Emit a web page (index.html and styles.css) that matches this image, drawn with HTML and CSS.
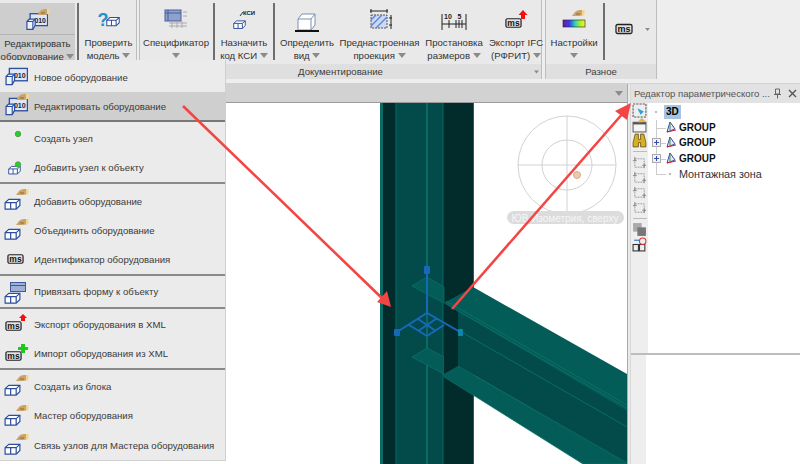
FILE: index.html
```html
<!DOCTYPE html>
<html lang="ru">
<head>
<meta charset="utf-8">
<title>Редактор оборудования</title>
<link rel="stylesheet" href="styles.css">
</head>
<body>
<svg class="defs" width="0" height="0" aria-hidden="true">
  <defs>
    <symbol id="hand" viewBox="0 0 14 8">
      <path d="M1 7 L4 3 Q6 1 9 1 L13 1 L13 6 L8 7 Z" fill="#c9a36a"/>
      <path d="M11 1 h2.5 v5 h-2.5 Z" fill="#f2d98a"/>
      <path d="M5 5 h4" stroke="#8a6a3a" stroke-width="1"/>
    </symbol>
    <symbol id="box" viewBox="0 0 18 13">
      <path d="M1 5 L5 1.5 H17 V8 L13 12 H1 Z" fill="#fff" stroke="#2b4f9e" stroke-width="1.3"/>
      <path d="M1 5 H13 V12 M13 5 L17 1.5 M7 5 V12" fill="none" stroke="#2b4f9e" stroke-width="1.3"/>
    </symbol>
    <symbol id="card" viewBox="0 0 24 20">
      <rect x="4.5" y="1.5" width="19" height="13" fill="#dfe7f5" stroke="#2b4f9e" stroke-width="1.4"/>
      <text x="15.5" y="11.5" class="ic-010">010</text>
      <path d="M1 10 L3.5 7.5 H10 V14 L7.5 18.5 H1 Z" fill="#eef2fa" stroke="#2b4f9e" stroke-width="1.3"/>
      <path d="M1 10 H7.5 V18.5 M7.5 10 L10 7.5" fill="none" stroke="#2b4f9e" stroke-width="1.2"/>
    </symbol>
    <symbol id="ms" viewBox="0 0 18 12">
      <rect x="1" y="1.5" width="16" height="9" rx="1.5" fill="#e4e4e4" stroke="#222" stroke-width="1.3"/>
      <text x="9" y="9" class="ic-ms">ms</text>
    </symbol>
    <symbol id="form" viewBox="0 0 16 10">
      <rect x="0.5" y="0.5" width="15" height="9" fill="#9fb0d6" stroke="#3e5a9c"/>
      <path d="M0.5 3.5 H15.5" stroke="#3e5a9c"/>
    </symbol>
    <symbol id="group" viewBox="0 0 12 13">
      <path d="M2 11 L5 1 L10 8 Z" fill="#e4e8f6" stroke="#3a49a8" stroke-width="1"/>
      <path d="M5 1 V9" stroke="#3a8a4a" stroke-width="1"/>
      <path d="M2 11 L11 9" stroke="#c22" stroke-width="1"/>
    </symbol>
    <symbol id="gnode" viewBox="0 0 16 16">
      <rect x="3" y="4" width="10" height="9" fill="none" stroke="#999" stroke-dasharray="2 1"/>
      <path d="M1 6 H5 M3 2 V6 M11 11 H15 M13 9 V14" stroke="#888"/>
    </symbol>
    <symbol id="arrow-down" viewBox="0 0 8 5">
      <path d="M0 0 H8 L4 5 Z" fill="#8b8b8b"/>
    </symbol>
  </defs>
</svg>

<div class="app">
  <header class="ribbon">
    <section class="panel panel-first">
      <div class="tools">
        <button class="tool tool-active w-75">
          <span class="tool-icon"><svg class="i-24" viewBox="0 0 24 24"><use href="#card" x="0" y="4" width="22" height="19"/><use href="#hand" x="10" y="0" width="14" height="8"/></svg></span>
          <span class="tool-label">Редактировать<br><span class="nowrap">оборудование <svg class="caret"><use href="#arrow-down"/></svg></span></span>
        </button>
        <i class="vsep"></i>
        <button class="tool w-57">
          <span class="tool-icon"><svg class="i-24" viewBox="0 0 24 24"><text x="6" y="18" class="ic-q">?</text><use href="#box" x="9" y="7" width="14" height="13"/></svg></span>
          <span class="tool-label">Проверить<br><span class="nowrap">модель <svg class="caret"><use href="#arrow-down"/></svg></span></span>
        </button>
      </div>
      <div class="panel-foot"></div>
    </section>

    <section class="panel panel-doc">
      <div class="tools">
        <button class="tool w-73">
          <span class="tool-icon"><svg class="i-24" viewBox="0 0 24 24"><rect x="1" y="2" width="16" height="11" fill="#8fa0cc" stroke="#475f9e"/><path d="M1 5 H17 M4 2 V13" stroke="#475f9e"/><path d="M5 15 H23 M5 18 H23 M8 13 V20 M13 13 V20 M18 13 V20 M19 4 H23 M19 8 H23" stroke="#aaa"/></svg></span>
          <span class="tool-label">Спецификатор<br><svg class="caret"><use href="#arrow-down"/></svg></span>
        </button>
        <i class="vsep"></i>
        <button class="tool w-56">
          <span class="tool-icon"><svg class="i-24" viewBox="0 0 24 24"><use href="#box" x="1" y="10" width="13" height="13"/><path d="M8 8 L11 4" stroke="#333"/><text x="17" y="7" class="ic-ksi">КСИ</text></svg></span>
          <span class="tool-label">Назначить<br><span class="nowrap">код КСИ <svg class="caret"><use href="#arrow-down"/></svg></span></span>
        </button>
        <i class="vsep"></i>
        <button class="tool w-62">
          <span class="tool-icon"><svg class="i-24" viewBox="0 0 24 24"><path d="M3 11 L7 6 H20 V17 L16 22 H3 Z" fill="#fff" stroke="#7d8db5"/><path d="M3 11 H16 V22 M16 11 L20 6" fill="none" stroke="#7d8db5"/><path d="M0 23 H24" stroke="#111" stroke-width="2"/></svg></span>
          <span class="tool-label">Определить<br><span class="nowrap">вид <svg class="caret"><use href="#arrow-down"/></svg></span></span>
        </button>
        <button class="tool w-83">
          <span class="tool-icon"><svg class="i-24" viewBox="0 0 24 24"><rect x="3" y="7" width="16" height="13" fill="#cbd9f2" stroke="#555" stroke-dasharray="2 1"/><path d="M3 18 L14 7 M8 20 L19 9 M3 12 L8 7" stroke="#5f86d6" stroke-width="1.4"/><path d="M2 3 H20 M3 1 V5 M19 1 V5 M23 7 V21 M21 10 H24 M21 17 H24" stroke="#222"/></svg></span>
          <span class="tool-label">Преднастроенная<br><span class="nowrap">проекция <svg class="caret"><use href="#arrow-down"/></svg></span></span>
        </button>
        <button class="tool w-66">
          <span class="tool-icon"><svg class="i-24 i-wide" viewBox="0 0 26 24"><path d="M1 6 V22 M25 6 V22 M1 16 H25 M8 12 V20 M15 12 V20 M18 12 V20 M21 12 V20" stroke="#222"/><text x="7" y="11" class="ic-num">10</text><text x="18.5" y="11" class="ic-num">5</text></svg></span>
          <span class="tool-label">Простановка<br><span class="nowrap">размеров <svg class="caret"><use href="#arrow-down"/></svg></span></span>
        </button>
        <button class="tool w-58">
          <span class="tool-icon"><svg class="i-24" viewBox="0 0 24 24"><use href="#ms" x="1" y="9" width="17" height="12"/><path d="M19 2 L23.5 7 H21 V11 H17 V7 H14.5 Z" fill="#e11"/></svg></span>
          <span class="tool-label">Экспорт IFC<br><span class="nowrap">(РФРИТ) <svg class="caret"><use href="#arrow-down"/></svg></span></span>
        </button>
      </div>
      <div class="panel-foot">
        <span>Документирование</span>
        <svg class="launcher"><use href="#arrow-down"/></svg>
      </div>
    </section>

    <section class="panel panel-misc">
      <div class="tools">
        <button class="tool w-56">
          <span class="tool-icon"><svg class="i-24" viewBox="0 0 24 24"><use href="#hand" x="9" y="1" width="14" height="8"/><defs><linearGradient id="spectrum"><stop offset="0" stop-color="#701a9a"/><stop offset=".3" stop-color="#3c3cf0"/><stop offset=".55" stop-color="#28d8b0"/><stop offset=".8" stop-color="#b8f020"/><stop offset="1" stop-color="#f0f040"/></linearGradient></defs><rect x="1" y="12" width="22" height="7" fill="url(#spectrum)" stroke="#222" stroke-width=".6"/></svg></span>
          <span class="tool-label">Настройки<br><svg class="caret"><use href="#arrow-down"/></svg></span>
        </button>
        <i class="vsep"></i>
        <div class="tool-ms">
          <svg class="i-ms"><use href="#ms"/></svg>
          <svg class="caret-sm"><use href="#arrow-down"/></svg>
        </div>
      </div>
      <div class="panel-foot"><span>Разное</span></div>
    </section>
  </header>

  <div class="workspace">
    <main class="doc">
      <div class="doc-tabs"><svg class="doc-caret"><use href="#arrow-down"/></svg></div>
      <svg class="viewport" viewBox="0 103 627 361" preserveAspectRatio="none">
        <!-- column -->
        <rect x="380" y="103" width="94" height="361" fill="#0b6a64"/>
        <rect x="383" y="103" width="13" height="361" fill="#022b2b"/>
        <rect x="396" y="103" width="47" height="361" fill="#034b4b"/>
        <rect x="426" y="103" width="2" height="361" fill="#0b6a64"/>
        <rect x="443" y="103" width="30" height="361" fill="#022b2b"/>
        <path d="M396 103 V464 M443 103 V464" stroke="#0b6a64" stroke-width="1"/>
        <!-- flanges through the column -->
        <path d="M412 286 L427 277 L444 287 V303 Z" fill="#045c58" stroke="#0d736c" stroke-width=".7"/>
        <path d="M412 357 L427 348 L444 357 V374 Z" fill="#045c58" stroke="#0d736c" stroke-width=".7"/>
        <!-- beam -->
        <path d="M458 300 L627 400 V464 L458 366 Z" fill="#034b4b"/>
        <path d="M444 303 L473 287 L627 374 V411 Z" fill="#045c58"/>
        <path d="M444 303 L627 408 M446 301 L627 405 M458 330 L627 427" stroke="#0d736c" stroke-width=".8" fill="none"/>
        <path d="M444 374 L458 366 L627 463 V464 L583 464 L473 395 L444 377 Z" fill="#045c58" stroke="#0d736c" stroke-width=".7"/>
        <path d="M444 303 L458 313 V366 L444 374 Z" fill="#022b2b"/>
        <!-- gizmo -->
        <g class="gizmo">
          <path d="M427 270 V313 M397 332 L427 313 L460 332 M427 336 L409 325 M427 336 L444 325 M418 319 L436 331 M436 319 L418 331"/>
          <rect x="424" y="266" width="6" height="8" rx="1" fill="#1668bb" stroke="none"/>
          <rect x="394" y="329" width="6" height="7" rx="1" fill="#1668bb" stroke="none"/>
          <rect x="458" y="329" width="5" height="7" rx="1" fill="#0f86a8" stroke="none"/>
        </g>
        <!-- compass -->
        <g class="compass">
          <circle cx="567" cy="165" r="49"/>
          <circle cx="567" cy="165" r="25"/>
          <path d="M518 165 H616 M567 116 V212"/>
        </g>
        <circle cx="577" cy="175" r="3.5" fill="#ecc9a8" stroke="#d2ae8e"/>
        <rect x="507" y="211" width="117" height="13" rx="6.5" fill="#dcdcdc"/>
        <text x="565" y="221.5" class="compass-label">ЮВ Изометрия, сверху</text>
      </svg>
    </main>

    <aside class="side">
      <div class="side-head">
        <span class="side-title">Редактор параметрического ...</span>
        <svg class="side-pin" viewBox="0 0 9 11"><path d="M2.5 1 H6.5 V6 H2.5 Z M1 6.5 H8 M4.5 7 V10.5" fill="none" stroke="#666"/></svg>
        <svg class="side-close" viewBox="0 0 9 9"><path d="M1 1 L8 8 M8 1 L1 8" stroke="#555" stroke-width="1.4"/></svg>
      </div>
      <div class="side-top">
        <div class="side-bar">
          <svg class="bar-ic" viewBox="0 0 14 14"><rect x="1" y="1" width="12" height="12" fill="none" stroke="#555" stroke-dasharray="2 1"/><path d="M5 5 L11 8 L8 11 Z" fill="#2aa0e0"/></svg>
          <svg class="bar-ic" viewBox="0 0 14 14"><rect x="1" y="4" width="12" height="9" fill="#f5f5f5" stroke="#666"/><rect x="1" y="4" width="12" height="2" fill="#555"/><path d="M5 4 L9 0 L13 3 L9 4 Z" fill="#e0b840"/></svg>
          <svg class="bar-ic" viewBox="0 0 14 14"><path d="M3 1 H6 V6 H8 V1 H11 L13 9 V13 H8 V9 H6 V13 H1 V9 Z" fill="#d8b024" stroke="#5a4a10" stroke-width=".7"/></svg>
          <i class="bar-sep"></i>
          <svg class="bar-ic"><use href="#gnode"/></svg>
          <svg class="bar-ic"><use href="#gnode"/></svg>
          <svg class="bar-ic"><use href="#gnode"/></svg>
          <svg class="bar-ic"><use href="#gnode"/></svg>
          <i class="bar-sep"></i>
          <svg class="bar-ic" viewBox="0 0 14 14"><rect x="1" y="1" width="8" height="8" fill="#aaa"/><rect x="5" y="5" width="8" height="8" fill="#777"/></svg>
          <svg class="bar-ic" viewBox="0 0 14 14"><rect x="1" y="7" width="5" height="6" fill="none" stroke="#333"/><rect x="7" y="7" width="5" height="6" fill="none" stroke="#333"/><circle cx="10" cy="4" r="3" fill="none" stroke="#d33"/><path d="M2 3 H7" stroke="#26c"/></svg>
        </div>
        <ul class="tree">
          <li class="tree-row tree-root"><i class="node-dot"></i><span class="tree-sel">3D</span></li>
          <li class="tree-row tree-branch"><svg class="tree-ic"><use href="#group"/></svg><b>GROUP</b></li>
          <li class="tree-row tree-branch"><i class="plus"></i><svg class="tree-ic"><use href="#group"/></svg><b>GROUP</b></li>
          <li class="tree-row tree-branch"><i class="plus"></i><svg class="tree-ic"><use href="#group"/></svg><b>GROUP</b></li>
          <li class="tree-row tree-branch tree-last"><i class="leaf-dot"></i><span>Монтажная зона</span></li>
        </ul>
      </div>
      <div class="side-bottom"><div class="side-bottom-bar"></div></div>
    </aside>
  </div>

  <nav class="menu">
    <a class="menu-item"><svg class="mi"><use href="#card" x="2" y="3" width="23" height="19"/></svg>Новое оборудование</a>
    <a class="menu-item menu-hover"><svg class="mi"><use href="#card" x="2" y="4" width="23" height="19"/><use href="#hand" x="12" y="0" width="14" height="8"/></svg>Редактировать оборудование</a>
    <a class="menu-item mt-1"><svg class="mi"><circle cx="15" cy="9" r="2.7" fill="#22d422" stroke="#5a9a5a"/></svg>Создать узел</a>
    <a class="menu-item menu-last"><svg class="mi"><use href="#box" x="5" y="10" width="13" height="10"/><circle cx="15" cy="9.5" r="2.7" fill="#22d422" stroke="#5a9a5a"/></svg>Добавить узел к объекту</a>

    <a class="menu-item mt-2"><svg class="mi"><use href="#box" x="1" y="10" width="17" height="12"/><use href="#hand" x="12" y="0" width="14" height="8"/></svg>Добавить оборудование</a>
    <a class="menu-item h-29"><svg class="mi"><use href="#box" x="1" y="10" width="17" height="12"/><use href="#hand" x="12" y="0" width="14" height="8"/></svg>Объединить оборудование</a>
    <a class="menu-item menu-last"><svg class="mi"><use href="#ms" x="4" y="6" width="17" height="12"/></svg>Идентификатор оборудования</a>

    <a class="menu-item menu-last menu-tall"><svg class="mi"><use href="#box" x="1" y="13" width="17" height="12"/><use href="#form" x="7" y="3" width="16" height="10"/></svg>Привязать форму к объекту</a>

    <a class="menu-item"><svg class="mi"><use href="#ms" x="2" y="9" width="17" height="12"/><path d="M20 3 L24 7 H22 V10 H18 V7 H16 Z" fill="#e11"/></svg>Экспорт оборудования в XML</a>
    <a class="menu-item menu-last"><svg class="mi"><use href="#ms" x="2" y="9" width="17" height="12"/><path d="M18 3 H22 V6 H25 V9 H22 V12 H18 V9 H15 V6 H18 Z" fill="#1ec81e"/></svg>Импорт оборудования из XML</a>

    <a class="menu-item mt-1"><svg class="mi"><use href="#box" x="1" y="11" width="17" height="12"/><use href="#hand" x="12" y="1" width="14" height="8"/></svg>Создать из блока</a>
    <a class="menu-item h-29"><svg class="mi"><use href="#box" x="1" y="11" width="17" height="12"/><use href="#hand" x="12" y="1" width="14" height="8"/></svg>Мастер оборудования</a>
    <a class="menu-item"><svg class="mi"><use href="#box" x="1" y="11" width="17" height="12"/><use href="#hand" x="12" y="1" width="14" height="8"/></svg>Связь узлов для Мастера оборудования</a>
  </nav>

  <svg class="arrows" viewBox="0 0 800 464">
    <path d="M183 106 L386 302" class="arrow-line"/>
    <path d="M391 307 L377 302 L387 291 Z" class="arrow-head"/>
    <path d="M452 309 L624 112" class="arrow-line"/>
    <path d="M631 103 L627 120 L615 111 Z" class="arrow-head"/>
  </svg>
</div>
</body>
</html>
```

FILE: styles.css
```css
* { box-sizing: border-box; }
html, body { margin: 0; padding: 0; }
body {
  width: 800px;
  height: 464px;
  overflow: hidden;
  font-family: "Liberation Sans", "Noto Sans", sans-serif;
  font-size: 9.6px;
  color: #333;
  background: #e9e9e9;
}
.defs { position: absolute; }
.app { position: relative; width: 800px; height: 464px; overflow: hidden; display: flex; flex-direction: column; }

/* ribbon */
.ribbon { display: flex; height: 84px; background: #eeeeee; padding-bottom: 4px; border-bottom: 1px solid #d2d2d2; flex: none; }
.panel { display: flex; flex-direction: column; background: #e9e9e9; border-right: 1px solid #bdbdbd; }
.panel-first { width: 137px; }
.panel-doc { width: 403px; margin-left: 2px; border-left: 1px solid #bdbdbd; }
.panel-misc { width: 112px; margin-left: 3px; border-left: 1px solid #bdbdbd; }
.tools { display: flex; flex: 1; align-items: stretch; }
.panel-foot {
  position: relative;
  height: 15px;
  background: #dfdfdf;
  text-align: center;
  line-height: 15px;
  color: #3c3c3c;
}
.launcher { position: absolute; right: 2px; top: 6px; width: 5px; height: 4px; }
.tool {
  display: flex;
  flex-direction: column;
  align-items: center;
  padding: 0;
  border: 0;
  background: none;
  font: inherit;
  color: inherit;
  flex: none;
}
.tool-active { background: #cecece; margin-top: 3px; padding-top: 0; }
.tool-active .tool-icon { height: 32px; border-bottom: 1px solid #b3b3b3; }
.tool-active .tool-label { padding-top: 2px; }
.tool-icon { height: 35px; width: 100%; display: flex; align-items: center; justify-content: center; padding-top: 4px; flex: none; }
.tool-active .tool-icon { padding-top: 3px; }
.tool-label { line-height: 13px; text-align: center; white-space: nowrap; padding-top: 1px; }
.nowrap { white-space: nowrap; }
.i-24 { width: 24px; height: 24px; display: block; }
.i-wide { width: 26px; }
.caret { width: 8px; height: 5px; display: inline-block; vertical-align: 1px; }
.w-75 { width: 75px; }
.w-57 { width: 57px; }
.w-73 { width: 72px; }
.w-56 { width: 56px; }
.w-62 { width: 62px; }
.w-83 { width: 83px; }
.w-66 { width: 66px; }
.w-58 { width: 58px; }
.vsep { width: 2px; margin: 3px 1px 4px; background: #6e6e6e; flex: none; }
.panel-first .vsep { margin-left: 2px; margin-right: 1px; }
.tool-ms { display: flex; align-items: center; padding: 0 0 6px 9px; gap: 12px; }
.i-ms { width: 18px; height: 12px; }
.caret-sm { width: 5px; height: 3px; }
.ic-010 { font: 700 7.5px "Liberation Sans", sans-serif; fill: #223; text-anchor: middle; }
.ic-ms { font: 700 9px "Liberation Sans", sans-serif; fill: #111; text-anchor: middle; }
.ic-q { font: 700 18px "Liberation Sans", sans-serif; fill: #2a8fc0; text-anchor: middle; }
.ic-ksi { font: 700 6px "Liberation Sans", sans-serif; fill: #222; text-anchor: middle; }
.ic-num { font: 700 7px "Liberation Sans", sans-serif; fill: #222; text-anchor: middle; }

/* workspace */
.workspace { display: flex; flex: 1; min-height: 0; }
.doc { width: 628px; display: flex; flex-direction: column; background: #fff; border-right: 1px solid #aaa; flex: none; }
.doc-tabs { height: 19px; background: #d2d2d2; border-bottom: 1px solid #9a9a9a; display: flex; justify-content: flex-end; align-items: center; padding-right: 4px; flex: none; }
.doc-caret { width: 8px; height: 5px; }
.viewport { width: 627px; height: 361px; display: block; }
.gizmo path { fill: none; stroke: #1668bb; stroke-width: 2; }
.compass circle, .compass path { fill: none; stroke: #d2d2d2; stroke-width: 1; }
.compass-label { font: 10px "Liberation Sans", sans-serif; fill: #f6f6f6; text-anchor: middle; }

/* side panel */
.side { flex: 1; margin-left: 2px; border-left: 1px solid #d8d8d8; display: flex; flex-direction: column; background: #fff; min-width: 0; }
.side-head { height: 19px; background: #e2e2e2; display: flex; align-items: center; padding: 0 2px 0 3px; color: #555; flex: none; }
.side-title { flex: 1; white-space: nowrap; }
.side-pin { width: 9px; height: 11px; margin-right: 6px; }
.side-close { width: 9px; height: 9px; margin-right: 1px; }
.side-top { display: flex; height: 252px; border-bottom: 2px solid #bdbdbd; flex: none; }
.side-bar { width: 17px; background: #eeeeee; display: flex; flex-direction: column; align-items: center; flex: none; }
.bar-ic { width: 15px; height: 15px; flex: none; }
.bar-sep { width: 14px; height: 1px; background: #bbb; margin: 3px 0; flex: none; }
.tree { list-style: none; margin: 0; padding: 1px 0 0; flex: 1; font-size: 10.8px; color: #333; }
.tree-row { position: relative; height: 15.5px; display: flex; align-items: center; padding-left: 31px; white-space: nowrap; }
.tree-row b { color: #111; font-size: 10px; font-weight: 700; }
.tree-root { padding-left: 16px; }
.tree-sel { background: #a9c4e0; color: #000; font-size: 10px; font-weight: 700; padding: 0 2px; line-height: 14px; }
.node-dot { position: absolute; left: 7px; top: 7px; width: 2px; height: 2px; background: #bbb; }
.tree-branch::before { content: ""; position: absolute; left: 8px; top: 0; bottom: 0; border-left: 1px solid #ccc; }
.tree-branch::after { content: ""; position: absolute; left: 8px; top: 8px; width: 10px; border-top: 1px solid #ccc; }
.tree-last::before { bottom: 7px; }
.tree-ic { position: absolute; left: 17px; top: 1px; width: 12px; height: 13px; z-index: 1; }
.plus { position: absolute; z-index: 1; left: 4px; top: 3px; width: 9px; height: 9px; background: #f2f2f2; border: 1px solid #aaa; }
.plus::before { content: ""; position: absolute; left: 1px; right: 1px; top: 3px; height: 1px; background: #3a49a8; }
.plus::after { content: ""; position: absolute; top: 1px; bottom: 1px; left: 3px; width: 1px; background: #3a49a8; }
.leaf-dot { position: absolute; z-index: 1; left: 21px; top: 7px; width: 2px; height: 2px; background: #bbb; }
.side-bottom { flex: 1; display: flex; }
.side-bottom-bar { width: 15px; background: #eeeeee; }

/* dropdown */
.menu {
  position: absolute;
  left: 0;
  top: 60px;
  width: 226px;
  height: 401px;
  padding-top: 2px;
  background: #ebebeb;
  border-right: 1px solid #cfcfcf;
  border-bottom: 1px solid #cfcfcf;
  display: flex;
  flex-direction: column;
}
.menu-item {
  height: 30px;
  flex: none;
  display: flex;
  align-items: center;
  padding-left: 3px;
  white-space: nowrap;
  color: #3a3a3a;
}
.mi { width: 31px; height: 26px; flex: none; }
.menu-hover { background: #cfcfcf; border-bottom: 2px solid #777; }
.menu-last { height: 31px; border-bottom: 2px solid #8a8a8a; }
.menu-tall { height: 33px; }
.mt-1 { margin-top: 1px; }
.mt-2 { margin-top: 2px; }
.h-29 { height: 29px; }
.arrows { position: absolute; left: 0; top: 0; width: 800px; height: 464px; pointer-events: none; }
.arrow-line { fill: none; stroke: #f44545; stroke-width: 2.6; }
.arrow-head { fill: #f44545; }
```
